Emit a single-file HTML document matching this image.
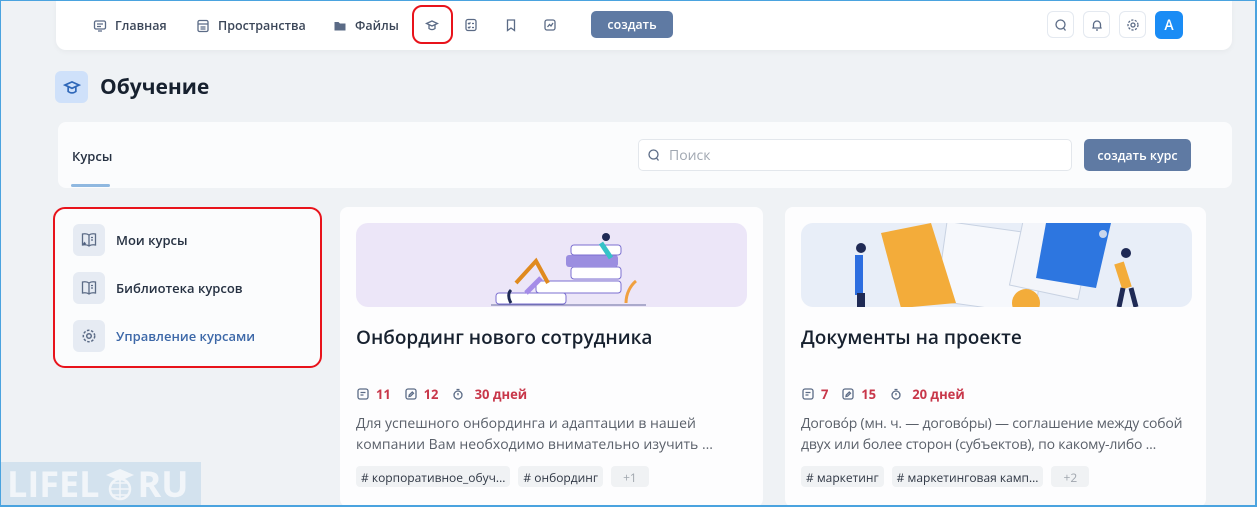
<!DOCTYPE html>
<html><head><meta charset="utf-8"><style>
*{box-sizing:border-box;margin:0;padding:0}
html{width:1257px;height:507px;overflow:hidden}
body{width:1257px;height:507px;overflow:hidden;background:#eff2f5;font-family:"Open Sans","Liberation Sans","Noto Sans CJK SC",sans-serif;position:relative;color:#1e2838}
.frame{position:absolute;left:0;top:0;width:1257px;height:507px;border:1px solid #4aa3df;border-width:1px 2px 2px 1px;pointer-events:none;z-index:10}
.abs{position:absolute}
.top{left:56px;top:0;width:1176px;height:50px;background:#fff;border-radius:0 0 10px 10px;box-shadow:0 2px 6px rgba(0,0,0,.04)}
.nav{top:17px;font-size:12.5px;font-weight:600;color:#3b4658;display:flex;align-items:center;gap:8px}
.ic{stroke:#5b6b86;fill:none;stroke-width:1.3}
.btn{background:#5f7aa3;color:#fff;font-size:12.5px;font-weight:600;border-radius:5px;display:flex;align-items:center;justify-content:center}
.sq{width:27px;height:27px;border:1px solid #e4e9f0;border-radius:6px;background:#fff;display:flex;align-items:center;justify-content:center;top:11px}
.panel{left:58px;top:122px;width:1174px;height:66px;background:#fbfcfd;border-radius:8px}
.side{left:53px;top:207px;width:269px;height:161px;border:2px solid #e8131b;border-radius:12px;background:#fbfcfd}
.si{position:absolute;left:18px;width:32px;height:32px;background:#e6ebf3;border-radius:6px;display:flex;align-items:center;justify-content:center}
.st{position:absolute;left:61px;font-size:13px;font-weight:600;color:#263142}
.card{top:207px;height:300px;background:#fdfdfe;border-radius:8px}
.img{position:absolute;left:16px;top:16px;height:84px;border-radius:12px;overflow:hidden}
.title{position:absolute;left:16px;top:117px;font-size:19px;font-weight:600;color:#17212f;white-space:nowrap}
.meta{position:absolute;left:16px;top:178px;display:flex;align-items:center;font-size:13px;font-weight:700;color:#c8374a;gap:6px}
.desc{position:absolute;left:16px;top:206px;font-size:14px;line-height:21px;color:#5a606a;width:410px;white-space:nowrap}
.tags{position:absolute;left:16px;top:259px;display:flex;gap:8px;font-size:12px;color:#2f3744}
.tag{background:#f0f2f4;border-radius:4px;padding:3px 5px;height:21px;white-space:nowrap}
</style></head><body>
<div class="frame"></div>
<div class="abs top"></div>
<div class="abs nav" style="left:93px"><svg width="14" height="14" viewBox="0 0 14 14"><rect class="ic" x="1.5" y="2" width="11" height="8" rx="1.5"/><path class="ic" d="M4 5h6M4 7.5h4M5 12h4"/></svg>Главная</div>
<div class="abs nav" style="left:196px"><svg width="14" height="14" viewBox="0 0 14 14"><rect class="ic" x="2" y="1.5" width="10" height="11" rx="1.5"/><path class="ic" d="M2 5h10M4.5 8h5M4.5 10h5"/></svg>Пространства</div>
<div class="abs nav" style="left:333px"><svg width="14" height="14" viewBox="0 0 14 14"><path d="M1.5 3h4l1.5 1.5h5.5v7h-11z" fill="#5b6b86"/></svg>Файлы</div>
<div class="abs" style="left:412px;top:5px;width:41px;height:39px;border:2px solid #e8131b;border-radius:10px"></div>
<svg class="abs" style="left:425px;top:18px" width="14" height="14" viewBox="0 0 14 14"><path class="ic" d="M1.5 5.5L7 3l5.5 2.5L7 8zM4 7v3.5c2 1.5 4 1.5 6 0V7"/></svg>
<svg class="abs" style="left:464px;top:18px" width="14" height="14" viewBox="0 0 14 14"><rect class="ic" x="2" y="1.5" width="10" height="11" rx="2"/><path class="ic" d="M4 5l1 1 1.5-1.5M8 5.5h2M4 9l1 1 1.5-1.5M8 9.5h2"/></svg>
<svg class="abs" style="left:504px;top:18px" width="14" height="14" viewBox="0 0 14 14"><path class="ic" d="M3.5 2h7v10.5L7 10l-3.5 2.5z"/></svg>
<svg class="abs" style="left:543px;top:18px" width="14" height="14" viewBox="0 0 14 14"><rect class="ic" x="2" y="2" width="10" height="10" rx="2"/><path class="ic" d="M4.5 9l2-2.5 1.5 1.5 2-3"/></svg>
<div class="abs btn" style="left:591px;top:11px;width:82px;height:27px">создать</div>
<div class="abs sq" style="left:1047px"><svg width="14" height="14" viewBox="0 0 14 14"><circle class="ic" cx="6.5" cy="6.5" r="4.5"/><path class="ic" d="M9.5 10l2 2.5"/></svg></div>
<div class="abs sq" style="left:1083px"><svg width="14" height="14" viewBox="0 0 14 14"><path class="ic" d="M3.5 10V6.5a3.5 3.5 0 017 0V10h1.2h-9.4zM6 12h2"/></svg></div>
<div class="abs sq" style="left:1119px"><svg width="14" height="14" viewBox="0 0 14 14"><circle class="ic" cx="7" cy="7" r="2"/><circle class="ic" cx="7" cy="7" r="5" stroke-dasharray="2.2 1.4"/></svg></div>
<div class="abs" style="left:1155px;top:11px;width:28px;height:28px;background:#1a8cf5;border-radius:6px;color:#fff;font-size:14px;font-weight:600;display:flex;align-items:center;justify-content:center">A</div>

<div class="abs" style="left:55px;top:71px;width:33px;height:32px;background:#cfe1fa;border-radius:6px;display:flex;align-items:center;justify-content:center"><svg width="18" height="18" viewBox="0 0 14 14"><path d="M1.5 5.5L7 3l5.5 2.5L7 8zM4 7v3.5c2 1.5 4 1.5 6 0V7" stroke="#2e67b8" fill="none" stroke-width="1.3"/></svg></div>
<div class="abs" style="left:100px;top:73px;font-size:21px;font-weight:700;color:#17212f">Обучение</div>

<div class="abs panel"></div>
<div class="abs" style="left:72px;top:147px;font-size:13px;font-weight:600;color:#263142">Курсы</div>
<div class="abs" style="left:71px;top:184px;width:39px;height:3px;background:#8fb8e0;border-radius:2px"></div>
<div class="abs" style="left:638px;top:139px;width:434px;height:32px;border:1px solid #e3e7ec;border-radius:5px;background:#fff"></div>
<svg class="abs" style="left:647px;top:148px" width="14" height="14" viewBox="0 0 14 14"><circle class="ic" cx="6.5" cy="6.5" r="4.5"/><path class="ic" d="M9.5 10l2 2.5"/></svg>
<div class="abs" style="left:669px;top:146px;font-size:14px;color:#a0a7b1">Поиск</div>
<div class="abs btn" style="left:1084px;top:139px;width:107px;height:32px">создать курс</div>

<div class="abs side">
<div class="si" style="top:15px"><svg width="18" height="18" viewBox="0 0 18 18"><path class="ic" d="M9 4c-2-1.5-4-1.5-6.5-1v11c2.5-.5 4.5-.5 6.5 1 2-1.5 4-1.5 6.5-1V3C13 2.5 11 2.5 9 4v11M11 6.5h2M11 9h2"/><path d="M4.5 10.5l.6 1.3 1.4.1-1 .9.3 1.4-1.3-.7-1.3.7.3-1.4-1-.9 1.4-.1z" fill="#4b5d7c"/></svg></div>
<div class="st" style="top:22px">Мои курсы</div>
<div class="si" style="top:63px"><svg width="18" height="18" viewBox="0 0 18 18"><path class="ic" d="M9 4c-2-1.5-4-1.5-6.5-1v11c2.5-.5 4.5-.5 6.5 1 2-1.5 4-1.5 6.5-1V3C13 2.5 11 2.5 9 4v11M11 6.5h2M11 9h2"/></svg></div>
<div class="st" style="top:70px">Библиотека курсов</div>
<div class="si" style="top:111px"><svg width="16" height="16" viewBox="0 0 14 14"><circle class="ic" cx="7" cy="7" r="2"/><circle class="ic" cx="7" cy="7" r="5" stroke-dasharray="2.2 1.4"/></svg></div>
<div class="st" style="top:118px;color:#3d68a8">Управление курсами</div>
</div>

<div class="abs card" style="left:340px;width:423px">
<div class="img" style="width:391px;background:#ece6f8">
<svg width="391" height="84"><line x1="135" y1="82" x2="290" y2="82" stroke="#6a6fa0"/><rect x="140" y="70" width="70" height="11" rx="3" fill="#fff" stroke="#7b6fd0"/><rect x="180" y="58" width="85" height="12" rx="3" fill="#fff" stroke="#7b6fd0"/><rect x="215" y="44" width="50" height="12" rx="3" fill="#fff" stroke="#7b6fd0"/><rect x="210" y="32" width="52" height="12" rx="3" fill="#9b8ee0"/><rect x="215" y="22" width="50" height="10" rx="3" fill="#fff" stroke="#7b6fd0"/><path d="M160 60l20-22 12 22" stroke="#e08a1e" stroke-width="4" fill="none"/><path d="M170 70l15-15" stroke="#a58ce8" stroke-width="5"/><circle cx="250" cy="14" r="4" fill="#1f2a55"/><path d="M245 20l10 15" stroke="#35c2c8" stroke-width="5"/><path d="M270 80c0-10 5-18 10-22" stroke="#f0a040" stroke-width="3" fill="none"/><path d="M155 80c-3-5-3-10 0-13" stroke="#1f2a55" stroke-width="3" fill="none"/></svg>
</div>
<div class="title">Онбординг нового сотрудника</div>
<div class="meta"><svg width="14" height="14" viewBox="0 0 14 14"><rect class="ic" x="2" y="2" width="10" height="10" rx="2"/><path class="ic" d="M4.5 5.5h5M4.5 8h3"/></svg>11&nbsp;&nbsp;<svg width="14" height="14" viewBox="0 0 14 14"><rect class="ic" x="2" y="2" width="10" height="10" rx="2"/><path class="ic" d="M5 9.5l.3-1.5 3-3 1.2 1.2-3 3z"/></svg>12&nbsp;&nbsp;<svg width="14" height="14" viewBox="0 0 14 14"><circle class="ic" cx="7" cy="8" r="4"/><path class="ic" d="M7 6v2.2M5.5 2.5h3"/></svg>&nbsp;30 дней</div>
<div class="desc">Для успешного онбординга и адаптации в нашей<br>компании Вам необходимо внимательно изучить ...</div>
<div class="tags"><span class="tag"># корпоративное_обуч...</span><span class="tag"># онбординг</span><span class="tag" style="color:#a0a6ae;padding:3px 12px">+1</span></div>
</div>

<div class="abs card" style="left:785px;width:421px">
<div class="img" style="width:391px;background:#e8eef8">
<svg width="391" height="84"><rect x="140" y="5" width="100" height="80" fill="#f6f8fc" stroke="#c8d2e2" transform="rotate(8 190 45)"/><rect x="215" y="0" width="70" height="70" fill="#f3f5fa" stroke="#c8d2e2" transform="rotate(12 250 35)"/><path d="M80 10l50-10 25 80-55 5z" fill="#f3ac3a"/><path d="M245 0h65l-15 65-60-10z" fill="#2d76e0"/><circle cx="60" cy="25" r="5" fill="#1f2a55"/><path d="M58 32v40" stroke="#2d6ee0" stroke-width="8"/><path d="M60 70v14" stroke="#1f2a55" stroke-width="8"/><circle cx="325" cy="30" r="5" fill="#1f2a55"/><path d="M318 40l8 25" stroke="#f3ac3a" stroke-width="10"/><path d="M322 65l-4 19M330 65l5 19" stroke="#1f2a55" stroke-width="5"/><circle cx="225" cy="80" r="14" fill="#f3ac3a"/><circle cx="302" cy="11" r="4" fill="#c9d6ec"/></svg>
</div>
<div class="title">Документы на проекте</div>
<div class="meta"><svg width="14" height="14" viewBox="0 0 14 14"><rect class="ic" x="2" y="2" width="10" height="10" rx="2"/><path class="ic" d="M4.5 5.5h5M4.5 8h3"/></svg>7&nbsp;&nbsp;<svg width="14" height="14" viewBox="0 0 14 14"><rect class="ic" x="2" y="2" width="10" height="10" rx="2"/><path class="ic" d="M5 9.5l.3-1.5 3-3 1.2 1.2-3 3z"/></svg>15&nbsp;&nbsp;<svg width="14" height="14" viewBox="0 0 14 14"><circle class="ic" cx="7" cy="8" r="4"/><path class="ic" d="M7 6v2.2M5.5 2.5h3"/></svg>&nbsp;20 дней</div>
<div class="desc" style="letter-spacing:-0.2px">Догово́р (мн. ч. — догово́ры) — соглашение между собой<br>двух или более сторон (субъектов), по какому-либо ...</div>
<div class="tags"><span class="tag"># маркетинг</span><span class="tag"># маркетинговая камп...</span><span class="tag" style="color:#a0a6ae;padding:3px 12px">+2</span></div>
</div>

<div class="abs" style="left:1px;top:462px;width:200px;height:44px;background:#d3e2ee;overflow:hidden;white-space:nowrap;color:#f1f5f9;font-size:36px;font-weight:700;line-height:44px;padding-left:6px">LIFEL<span style="display:inline-block;width:38px"></span>RU</div>
<svg class="abs" style="left:104px;top:466px" width="32" height="36" viewBox="0 0 32 36"><path d="M2 9L16 3l14 6-14 6z" fill="#f1f5f9"/><circle cx="16" cy="23" r="10" fill="none" stroke="#f1f5f9" stroke-width="2.5"/><path d="M6 23h20M16 13v20M9 17h14M9 29h14" stroke="#f1f5f9" stroke-width="1.5"/></svg>
</body></html>
